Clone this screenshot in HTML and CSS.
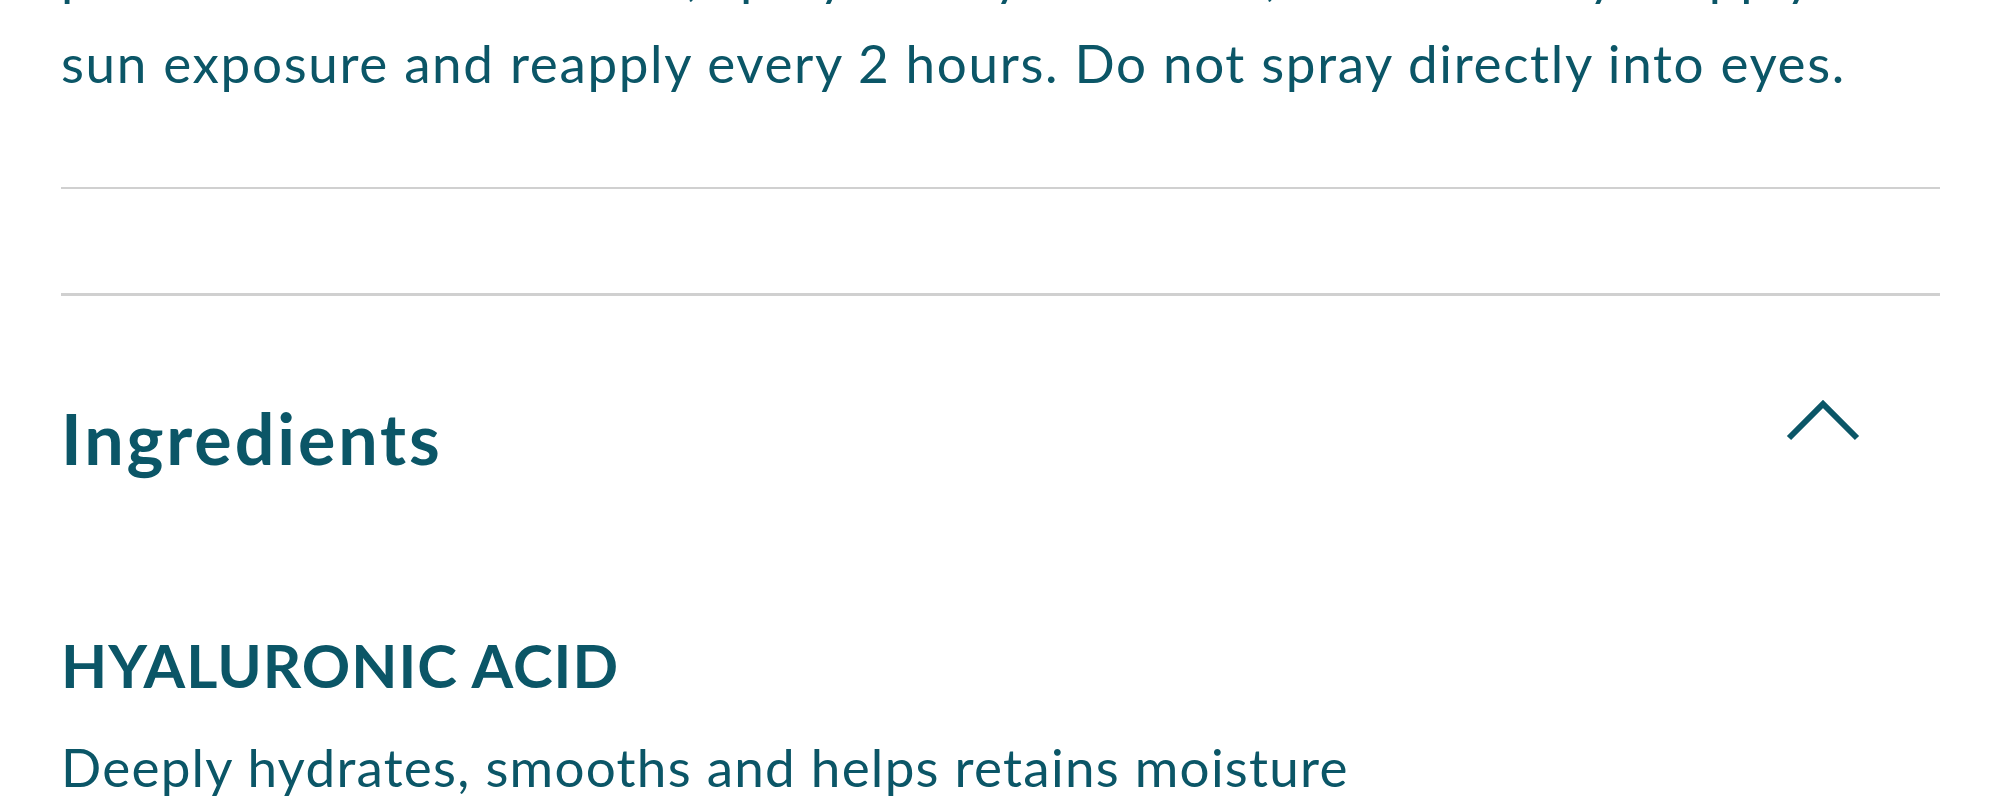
FILE: index.html
```html
<!DOCTYPE html>
<html lang="en">
<head>
<meta charset="utf-8">
<title>Ingredients</title>
<link rel="stylesheet" href="styles.css">
</head>
<body>
<main class="page">
  <section class="usage">
    <p class="usage-text">protect skin from the sun, spray evenly over face, then liberally reapply before<br>sun exposure and reapply every 2 hours. Do not spray directly into eyes.</p>
  </section>
  <div class="accordion-item accordion-item--empty"></div>
  <section class="accordion-item accordion-item--open">
    <div class="accordion-header">
      <h2 class="accordion-title">Ingredients</h2>
      <svg class="chevron" width="74" height="42" viewBox="0 0 74 42" aria-hidden="true">
        <path d="M3 39 L37 5 L71 39" fill="none" stroke="currentColor" stroke-width="6" stroke-linecap="butt" stroke-linejoin="miter"/>
      </svg>
    </div>
    <div class="ingredient">
      <h3 class="ingredient-name">HYALURONIC ACID</h3>
      <p class="ingredient-desc">Deeply hydrates, smooths and helps retains moisture</p>
    </div>
  </section>
</main>
</body>
</html>
```

FILE: styles.css
```css
html, body {
  margin: 0;
  padding: 0;
  background: #ffffff;
}

body {
  font-family: "Lato", "Noto Sans", sans-serif;
  color: #0b5667;
  overflow: hidden;
  height: 800px;
}

.page {
  padding: 0 60px 0 61px;
}

.usage {
  padding-bottom: 80px;
}

.usage-text {
  margin: -69px 0 0 0;
  font-size: 53px;
  line-height: 88px;
  font-weight: 400;
  letter-spacing: 1.65px;
  white-space: nowrap;
}

.accordion-item--empty {
  border-top: 2px solid #d0d0d0;
  height: 104px;
}

.accordion-item--open {
  border-top: 3px solid #d0d0d0;
}

.accordion-header {
  display: flex;
  justify-content: space-between;
  align-items: center;
  padding-top: 103px;
}

.accordion-title {
  margin: 0;
  font-size: 70px;
  line-height: 68px;
  font-weight: 700;
  letter-spacing: 2.9px;
}

.chevron {
  display: block;
  margin-right: 80px;
  margin-bottom: 36px;
  color: #0b5667;
}

.ingredient {
  padding-top: 158px;
}

.ingredient-name {
  margin: 0;
  font-size: 60px;
  line-height: 60px;
  font-weight: 700;
  letter-spacing: 1px;
}

.ingredient-desc {
  margin: 24px 0 0 0;
  font-size: 53px;
  line-height: 96px;
  font-weight: 400;
  letter-spacing: 1.25px;
}
```
